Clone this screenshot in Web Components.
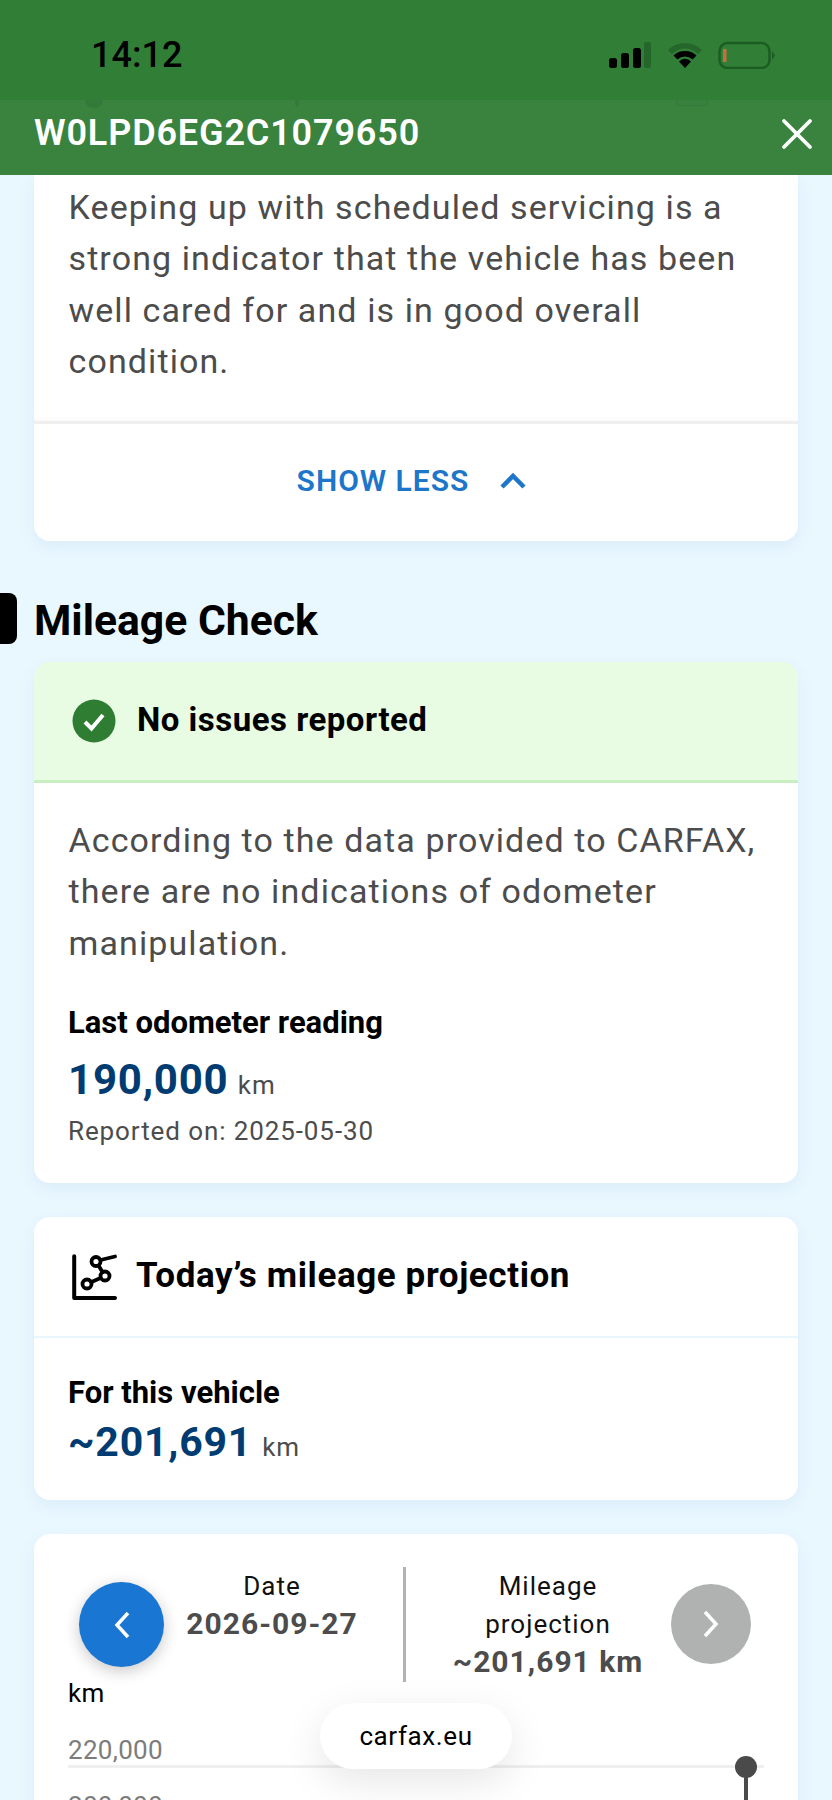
<!DOCTYPE html>
<html><head><meta charset="utf-8">
<style>
html,body{margin:0;padding:0;height:1800px;overflow:hidden;background:#e9f7ff;font-family:Roboto,sans-serif}
#page{height:1800px;overflow:hidden;position:relative;display:flex;flex-direction:column}
x-content{flex:1}
</style></head>
<body>
<div id="page">
<x-statusbar></x-statusbar>
<x-appbar title="W0LPD6EG2C1079650"></x-appbar>
<x-content>
  <x-card flush>
    <x-para top="7">Keeping up with scheduled servicing is a strong indicator that the vehicle has been well cared for and is in good overall condition.</x-para>
    <x-showless></x-showless>
  </x-card>
  <x-section-title>Mileage Check</x-section-title>
  <x-card>
    <x-banner>No issues reported</x-banner>
    <x-para top="32">According to the data provided to CARFAX, there are no indications of odometer manipulation.</x-para>
    <x-reading label="Last odometer reading" value="190,000" note="Reported on: 2025-05-30"></x-reading>
  </x-card>
  <x-card gap>
    <x-card-head>Today’s mileage projection</x-card-head>
    <x-projection label="For this vehicle" value="~201,691"></x-projection>
  </x-card>
  <x-card gap>
    <x-carousel></x-carousel>
    <x-chart></x-chart>
  </x-card>
</x-content>
<x-toast>carfax.eu</x-toast>
</div>
<script>
function def(name, css, html, init){
  customElements.define(name, class extends HTMLElement{
    connectedCallback(){
      if(this.shadowRoot) return;
      const r=this.attachShadow({mode:'open'});
      const g=a=>this.getAttribute(a)||'';
      r.innerHTML='<style>'+css+'</style>'+(typeof html==='function'?html(g):html);
      if(init) init(this,r);
    }
  });
}
def('x-statusbar',`:host{display:flex;align-items:center;height:100px;box-sizing:border-box;background:#317f36;padding:10px 56px 0 91px;justify-content:space-between;color:#000;flex:none}
 .t{font:500 36px/1 Roboto,sans-serif}
 .i{display:flex;align-items:center;gap:15px}
 svg{display:block}`,
 `<span class="t">14:12</span><div class="i">
 <svg width="44" height="28" viewBox="0 0 44 28"><rect x="1" y="17" width="8" height="10" rx="2.5"/><rect x="13" y="12" width="8" height="15" rx="2.5"/><rect x="25" y="7" width="8" height="20" rx="2.5"/><rect x="36" y="1" width="7" height="26" rx="2" fill="#25672b"/></svg>
 <svg width="36" height="28" viewBox="0 0 36 28"><path d="M1 9 A24 24 0 0 1 35 9 L31 13 A18 18 0 0 0 5 13Z" fill="#25672b"/><path d="M6.500 14.500 A17 17 0 0 1 29.500 14.500 L25.500 18.500 A11 11 0 0 0 10.500 18.500Z" fill="#000"/><path d="M12 20.500 A8 8 0 0 1 24 20.500 L18 27Z" fill="#000"/></svg>
 <svg width="58" height="28" viewBox="0 0 58 28"><rect x="1.500" y="2" width="50" height="25" rx="8" fill="none" stroke="#1d5c23" stroke-width="2.500"/><rect x="5" y="8" width="3.500" height="13" fill="#c56f3f"/><path d="M54 10 L57 14.500 L54 19Z" fill="#1d5c23"/></svg>
 </div>`);
def('x-appbar',`:host{display:flex;align-items:center;justify-content:space-between;height:75px;background:#3a833f;color:#fff;padding:0 18px 0 34px;flex:none;position:relative}
 h1{margin:-9px 0 0;font:600 36px/1 Roboto,sans-serif;letter-spacing:.85px}
 svg{display:block;margin-top:-8px}
 .g{position:absolute;top:0;height:8px;background:#32793a}`,
 g=>`<h1>${g('title')}</h1><svg width="34" height="34" viewBox="0 0 34 34"><path d="M4 4 L30 30 M30 4 L4 30" stroke="#fff" stroke-width="3.800" stroke-linecap="round"/></svg>
 <span class="g" style="left:85px;width:18px;border-radius:0 0 9px 9px"></span><span class="g" style="left:295px;width:4px;height:6px;border-radius:0 0 2px 2px"></span><span class="g" style="left:676px;width:30px;height:5px;background:#37803d;border:1px solid #357a3b;border-top:0"></span>`);
def('x-card',`:host{display:block;background:#fff;border-radius:0 0 16px 16px;box-shadow:0 6px 16px rgba(60,120,170,.07);overflow:hidden}
 :host(:not([flush])){border-radius:16px}
 :host([gap]){margin-top:34px}`,`<slot></slot>`);
def('x-para',`:host{display:block;padding:0 30px 34px 34.500px;font:400 34px/51.300px Roboto,sans-serif;color:#4c4c4c;letter-spacing:1.1px}`,
 `<slot></slot>`,(h)=>{h.style.paddingTop=h.getAttribute('top')+'px'});
def('x-showless',`:host{display:flex;align-items:center;justify-content:center;gap:30px;height:120px;border-top:3px solid #efefef;box-shadow:0 -3px 6px rgba(0,0,0,.025);box-sizing:border-box;color:#1d76c9;font:600 30px/1 Roboto,sans-serif;letter-spacing:1px;margin-left:-8px;padding-bottom:3px}
 svg{display:block}`,`<span>SHOW LESS</span><svg width="28" height="18" viewBox="0 0 28 18"><path d="M3 15 L14 4 L25 15" fill="none" stroke="#1d76c9" stroke-width="4.500"/></svg>`);
def('x-section-title',`:host{display:block;position:relative;margin:53px 0 15px;font:700 42.700px/53px Roboto,sans-serif;color:#000}
 i{position:absolute;left:-34px;top:-1px;width:17px;height:51px;background:#000;border-radius:0 8px 8px 0}`,`<i></i><slot></slot>`);
def('x-banner',`:host{display:flex;align-items:center;gap:21px;height:121px;box-sizing:border-box;background:#e8fbe3;border-bottom:3px solid #c8efbf;padding:0 0 0 38px;font:700 33px/1 Roboto,sans-serif;color:#000;letter-spacing:.5px}
 svg{display:block}span{margin-top:-4px}`,`<svg width="44" height="44" viewBox="0 0 44 44"><circle cx="22" cy="22" r="21.500" fill="#2e7d32"/><path d="M13 23 L19.500 29.500 L31 16" fill="none" stroke="#fff" stroke-width="4"/></svg><span><slot></slot></span>`);
def('x-reading',`:host{display:block;padding:0 34px 35px 34px;margin-top:1px}
 .l{font:700 31px/38px Roboto,sans-serif;color:#000}
 .v{font:700 42px/56px Roboto,sans-serif;color:#003c71;letter-spacing:.8px;margin-top:10px}
 .v small{font:400 26px/1 Roboto,sans-serif;color:#4c4c4c;letter-spacing:1px;margin-left:-2px}
 .n{font:400 26px/34px Roboto,sans-serif;color:#4c4c4c;letter-spacing:.9px;margin-top:6px}`,
 g=>`<div class="l">${g('label')}</div><div class="v">${g('value')} <small>km</small></div><div class="n">${g('note')}</div>`);
def('x-card-head',`:host{display:flex;align-items:center;gap:18px;height:121px;box-sizing:border-box;padding-left:38px;border-bottom:2px solid #e8f6fe;font:700 35px/1 Roboto,sans-serif;color:#000;letter-spacing:.6px}
 svg{display:block}span{margin-top:-2px}`,`<svg width="46" height="46" viewBox="0 0 46 46"><path d="M2.200 2.200 V44 H43" fill="none" stroke="#000" stroke-width="4" stroke-linecap="round" stroke-linejoin="round"/><g fill="none" stroke="#000" stroke-width="3.800" stroke-linecap="round"><circle cx="15" cy="30" r="4.500"/><circle cx="24" cy="7.500" r="4.500"/><circle cx="33" cy="22" r="4.500"/><path d="M19.500 28 L28.500 24 M28.500 6 L43 2.500 M26.500 11.500 L30.500 18"/></g></svg><span><slot></slot></span>`);
def('x-projection',`:host{display:block;padding:36px 34px 32px 34px}
 .l{font:700 31px/38px Roboto,sans-serif;color:#000}
 .v{font:700 41px/52px Roboto,sans-serif;color:#003c71;letter-spacing:.8px;margin-top:4px}
 .v small{font:400 26px/1 Roboto,sans-serif;color:#4c4c4c;letter-spacing:1px;margin-left:-1px}`,
 g=>`<div class="l">${g('label')}</div><div class="v">${g('value')} <small>km</small></div>`);
def('x-carousel',`:host{display:flex;align-items:center;height:115px;margin-top:33px;padding-left:45px;color:#000}
 .b{border-radius:50%;display:flex;align-items:center;justify-content:center;flex:none}
 .p{width:85px;height:85px;background:#1976d2;box-shadow:0 4px 16px rgba(0,0,0,.22)}
 .n{width:80px;height:80px;background:#b0b2b1;margin-left:3px;margin-top:-2px}
 .s{background:#b3b3b3;width:3px;height:115px;margin-left:23px;flex:none}
 .c{text-align:center;align-self:flex-start;font:400 26px/38px Roboto,sans-serif;letter-spacing:1px;color:#111;flex:none}
 .c b{display:block;font:700 30px/37px Roboto,sans-serif;color:#4c4c4c;letter-spacing:1px}
 .d{width:216px}.m{width:240px;margin-left:22px}
 svg{display:block}`,
 `<div class="b p"><svg width="18" height="30" viewBox="0 0 18 30"><path d="M15 3 L4 15 L15 27" fill="none" stroke="#fff" stroke-width="3.500"/></svg></div>
 <div class="c d">Date<b>2026-09-27</b></div><div class="s"></div>
 <div class="c m">Mileage<br>projection<b>~201,691 km</b></div>
 <div class="b n"><svg width="18" height="30" viewBox="0 0 18 30"><path d="M3 3 L14 15 L3 27" fill="none" stroke="#fff" stroke-width="3.500"/></svg></div>`);
def('x-chart',`:host{display:block;padding:0 34px;position:relative;height:200px;color:#7c7c7c}
 .u{font:400 26px/32px Roboto,sans-serif;color:#000;letter-spacing:.3px;margin-top:-5px;height:40px}
 .r{font:400 26px/32px Roboto,sans-serif;letter-spacing:.3px;padding-top:2px}
 .l{height:3px;background:#efefef;margin-bottom:20px;margin-top:-1px}
 .d{position:absolute;right:41px;top:72px;width:22px;height:22px;border-radius:50%;background:#4a4a4a;margin-top:7px}
 .k{position:absolute;right:50px;top:84px;width:4px;height:130px;background:#4a4a4a}`,
 `<div class="u">km</div><div class="r" style="margin-top:15px">220,000</div><div class="l"></div><div class="r">200,000</div><i class="d"></i><i class="k"></i>`);
def('x-toast',`:host{position:absolute;left:320px;top:1703px;width:192px;height:66px;border-radius:33px;background:#fff;box-shadow:0 12px 40px rgba(0,0,0,.10);display:flex;align-items:center;justify-content:center;font:400 26px/1 Roboto,sans-serif;color:#000;letter-spacing:.6px}`,`<slot></slot>`);
customElements.define('x-content',class extends HTMLElement{
  connectedCallback(){ if(this.shadowRoot)return; const r=this.attachShadow({mode:'open'}); r.innerHTML='<style>:host{display:block;padding:0 34px;flex:1}</style><slot></slot>'; }
});
</script>
</body></html>
